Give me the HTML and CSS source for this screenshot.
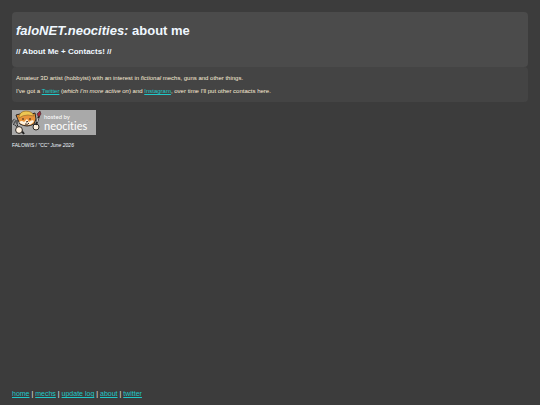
FILE: index.html
```
<!DOCTYPE html>
<html lang="en">
<head>
    <meta charset="utf-8">
    <title>faloNET - about me</title>
    <link rel="stylesheet" href="styles.css">
</head>
<body>
    <div class="header">
        <h1><i>faloNET.neocities:</i> about me</h1>
        <h2>// About Me + Contacts! //</h2>
    </div>
    <div class="content">
        <p>Amateur 3D artist (hobbyist) with an interest in <i>fictional</i> mechs, guns and other things.</p>
        <p>I've got a <a href="#">Twitter</a> (<i>which I'm more active on</i>) and <a href="#">Instagram</a>, over time I'll put other contacts here.</p>
    </div>

    <a class="badge" href="#">
        <svg class="cat" viewBox="0 0 30 25" aria-hidden="true">
            <!-- fork -->
            <path d="M1 10l1 4 3 1v-5M2 9l2 6 4 5" fill="none" stroke="#222" stroke-width="2"/>
            <path d="M1 10l1 4 3 1v-5M2 9l2 6 4 5" fill="none" stroke="#999" stroke-width="1"/>
            <!-- body and tail -->
            <path d="M9 20l3 4" fill="none" stroke="#222" stroke-width="2"/>
            <!-- head -->
            <path d="M6 10L4 5l4-1q6-5 12 0l3-1 1 6-2 5q-7 4-14 0z" fill="#e8933c" stroke="#292522"/>
            <path d="M7 6Q9 1 14 1q6 0 8 5l-6-1q-5 0-9 3z" fill="#edc653" stroke="#9a6b28" stroke-width=".7"/>
            <path d="M7 12q3-2 5 0l3-3 2 3q3-3 5-1-2 4-7 4-6 0-8-3z" fill="#fff3df"/>
            <path d="M11 8v2M18 8v2M14 12l2-.5M13 14q3 1 4-1" fill="none" stroke="#352016" stroke-width="1"/>
            <!-- paws -->
            <circle cx="7" cy="20" r="3.4" fill="#fff1df" stroke="#292522"/>
            <circle cx="24" cy="17" r="3" fill="#fff1df" stroke="#292522"/>
            <!-- brush -->
            <path d="M24 15l3-9" stroke="#222" stroke-width="2"/>
            <path d="M25 12l1-4" stroke="#ddd"/>
            <path d="M26 6l-1-2 3-3 1 3-2 3z" fill="#a52939" stroke="#382026" stroke-width=".6"/>
        </svg>
        <span class="badge-text"><span class="hosted">hosted by</span><span class="neo">neocities</span></span>
    </a>

    <p class="credit">FALOWIS / "CC" <i>June 2026</i></p>

    <div class="footer">
        <a href="#">home</a> | <a href="#">mechs</a> | <a href="#">update log</a> | <a href="#">about</a> | <a href="#">twitter</a>
    </div>
</body>
</html>
```
FILE: styles.css
```
* {
    box-sizing: border-box;
}

body {
    display: flex;
    flex-direction: column;
    min-height: 100vh;
    margin: 0;
    padding: 12px 12px 6px;
    background-color: #3c3c3c;
    color: #f0f8ff;
    font-family: "Liberation Sans", Arial, sans-serif;
    font-size: 7px;
    line-height: 10px;
}

.header {
    padding: 10px 4px;
    background-color: #4b4b4b;
    border-radius: 4px;
}

h1 {
    margin: 0 0 8px;
    font-size: 13px;
    line-height: 17px;
}

h2 {
    margin: 0;
    font-size: 8px;
    line-height: 10px;
}

.content {
    padding: 6px 4px;
    background-color: #444;
    border-radius: 4px;
    color: #faebd7;
    font-size: 6px;
}

.content p {
    margin: 0 0 3px;
}

.content p:last-child {
    margin: 0;
}

a {
    color: #1fc8c8;
}

.badge {
    display: flex;
    align-self: flex-start;
    width: 84px;
    height: 25px;
    margin-top: 8px;
    background-color: #a9a9a9;
    color: white;
    text-decoration: none;
}

.cat {
    width: 30px;
    height: 25px;
}

.badge-text {
    display: flex;
    flex-direction: column;
    padding: 3px 0 0 2px;
    font-family: Lato, sans-serif;
    font-variant-ligatures: none;
}

.hosted {
    font-size: 6px;
    line-height: 8px;
}

.neo {
    font-size: 11px;
    line-height: 10px;
}

.credit {
    margin: 5px 0 0;
    font-size: 5px;
}

.footer {
    margin-top: auto;
}
```
